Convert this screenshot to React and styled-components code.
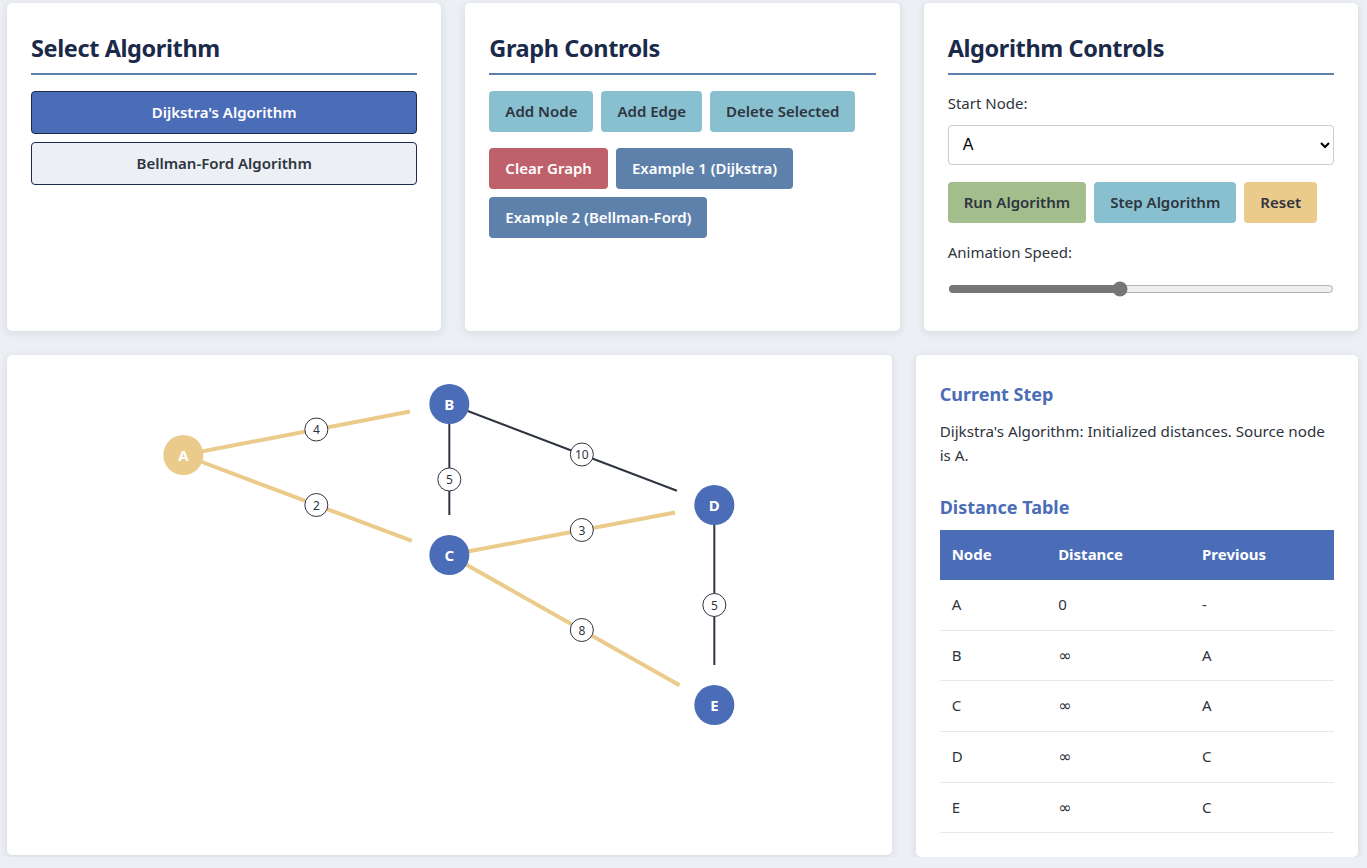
import React, { useState } from "react";
import styled, { createGlobalStyle } from "styled-components";

const C = {
  bg: "#eceff4",
  text: "#2e3440",
  navy: "#1b2a4a",
  primary: "#4b6cb7",
  line: "#5e81ac",
  frost: "#88c0d0",
  red: "#bf616a",
  green: "#a3be8c",
  yellow: "#ebcb8b",
  steel: "#5e81ac",
};

const Global = createGlobalStyle`
  html, body { margin: 0; padding: 0; background: ${C.bg}; }
  body {
    font-family: "Noto Sans", "Open Sans", sans-serif;
    color: ${C.text};
    line-height: 1.6;
  }
  * { box-sizing: border-box; }
`;

const Page = styled.div`
  padding: 3px 9px 0 7px;
  display: flex;
  flex-direction: column;
  gap: 24px;
`;

const TopGrid = styled.div`
  display: grid;
  grid-template-columns: repeat(3, 1fr);
  gap: 24px;
`;

const BottomGrid = styled.div`
  display: grid;
  grid-template-columns: 2fr 1fr;
  gap: 24px;
  align-items: start;
`;

const Card = styled.section`
  background: #fff;
  border-radius: 5px;
  box-shadow: 0 2px 8px rgba(46, 52, 64, 0.12);
  padding: ${(p) => (p.$flush ? "0" : "24px")};
`;

const Title = styled.h2`
  margin: 0 0 16px;
  font-size: 23.5px;
  letter-spacing: -0.4px;
  line-height: 36px;
  font-weight: 700;
  color: ${C.navy};
  padding: 3px 0 7px;
  border-bottom: 2px solid ${C.line};
`;

const AlgoList = styled.div`
  display: flex;
  flex-direction: column;
  gap: 8px;
`;

const AlgoButton = styled.button`
  font-family: inherit;
  font-size: 15px;
  font-weight: 600;
  line-height: 25px;
  padding: 8px 16px;
  border-radius: 4px;
  border: 1px solid ${C.navy};
  background: ${(p) => (p.$active ? C.primary : C.bg)};
  color: ${(p) => (p.$active ? "#fff" : C.text)};
  cursor: pointer;
  width: 100%;
`;

const ButtonRow = styled.div`
  display: flex;
  flex-wrap: wrap;
  gap: 8px;
  margin-bottom: ${(p) => p.$mb || 0}px;
`;

const tones = {
  frost: { bg: C.frost, fg: C.text },
  red: { bg: C.red, fg: "#fff" },
  steel: { bg: C.steel, fg: "#fff" },
  green: { bg: C.green, fg: C.text },
  yellow: { bg: C.yellow, fg: C.text },
};

const Btn = styled.button`
  font-family: inherit;
  font-size: 15px;
  font-weight: 600;
  line-height: 25px;
  padding: 8px 16px;
  border: none;
  border-radius: 4px;
  background: ${(p) => tones[p.$tone].bg};
  color: ${(p) => tones[p.$tone].fg};
  cursor: pointer;
`;

const Label = styled.label`
  display: block;
  font-size: 15px;
  line-height: 25.6px;
  margin-bottom: ${(p) => p.$mb || 0}px;
`;

const Select = styled.select`
  display: block;
  width: 100%;
  height: 40px;
  padding: 0 10px;
  font-family: "Liberation Sans", Arial, sans-serif;
  font-size: 16px;
  color: #000;
  border: 1px solid #c9ccd1;
  border-radius: 4px;
  background: #fff;
  margin-bottom: 17px;
`;

const Range = styled.input`
  display: block;
  width: 100%;
  height: 16px;
  margin: 16px 0 10px;
  accent-color: #767676;
`;

const GraphSvg = styled.svg`
  display: block;
  width: 100%;
  height: 500px;
`;

const SubTitle = styled.h3`
  margin: ${(p) => p.$mt || 0}px 0 ${(p) => p.$mb || 0}px;
  font-size: 18px;
  line-height: 30px;
  font-weight: 700;
  color: ${C.primary};
`;

const StepText = styled.p`
  margin: 0;
  font-size: 15.2px;
  line-height: 24px;
`;

const Table = styled.table`
  width: 100%;
  border-collapse: collapse;
  table-layout: fixed;
  font-size: 15px;
`;

const Th = styled.th`
  background: ${C.primary};
  color: #fff;
  text-align: left;
  font-weight: 700;
  padding: 12px;
  line-height: 25.6px;
  width: ${(p) => p.$w};
`;

const Td = styled.td`
  padding: 12px;
  height: 50.5px;
  line-height: 25.6px;
  border-bottom: 1px solid #e5e9f0;
`;

const Inf = styled.span`
  font-family: "DejaVu Sans", sans-serif;
  font-size: 16px;
  line-height: 1;
`;

const nodes = {
  A: { x: 176, y: 100 },
  B: { x: 442, y: 49 },
  C: { x: 442, y: 200 },
  D: { x: 707, y: 150 },
  E: { x: 707, y: 350 },
};

const edges = [
  { from: "A", to: "B", w: 4, hl: true },
  { from: "A", to: "C", w: 2, hl: true },
  { from: "B", to: "C", w: 5 },
  { from: "B", to: "D", w: 10 },
  { from: "C", to: "D", w: 3, hl: true },
  { from: "C", to: "E", w: 8, hl: true },
  { from: "D", to: "E", w: 5 },
];

const highlighted = new Set(["A"]);

function Graph() {
  return (
    <GraphSvg viewBox="0 0 884 500">
      {edges.map((e) => {
        const a = nodes[e.from];
        const b = nodes[e.to];
        const dx = b.x - a.x;
        const dy = b.y - a.y;
        const len = Math.hypot(dx, dy);
        const ex = b.x - (dx / len) * 40;
        const ey = b.y - (dy / len) * 40;
        return (
          <line
            key={e.from + e.to}
            x1={a.x}
            y1={a.y}
            x2={ex}
            y2={ey}
            stroke={e.hl ? C.yellow : C.text}
            strokeWidth={e.hl ? 4 : 2}
          />
        );
      })}
      {edges.map((e) => {
        const a = nodes[e.from];
        const b = nodes[e.to];
        const mx = (a.x + b.x) / 2;
        const my = (a.y + b.y) / 2;
        return (
          <g key={"w" + e.from + e.to}>
            <circle cx={mx} cy={my} r={11.5} fill="#fff" stroke={C.text} strokeWidth={1} />
            <text
              x={mx}
              y={my}
              textAnchor="middle"
              dominantBaseline="central"
              fontSize="12"
              fontFamily="Noto Sans, sans-serif"
              fill={C.text}
            >
              {e.w}
            </text>
          </g>
        );
      })}
      {Object.entries(nodes).map(([k, n]) => (
        <g key={k}>
          <circle cx={n.x} cy={n.y} r={20} fill={highlighted.has(k) ? C.yellow : C.primary} />
          <text
            x={n.x}
            y={n.y}
            textAnchor="middle"
            dominantBaseline="central"
            fontSize="15"
            fontWeight="700"
            fontFamily="Noto Sans, sans-serif"
            fill="#fff"
          >
            {k}
          </text>
        </g>
      ))}
    </GraphSvg>
  );
}

const rows = [
  ["A", "0", "-"],
  ["B", "∞", "A"],
  ["C", "∞", "A"],
  ["D", "∞", "C"],
  ["E", "∞", "C"],
];

export default function App() {
  const [algo, setAlgo] = useState("dijkstra");
  const [speed, setSpeed] = useState(5);
  return (
    <>
      <Global />
      <Page>
        <TopGrid>
          <Card>
            <Title>Select Algorithm</Title>
            <AlgoList>
              <AlgoButton $active={algo === "dijkstra"} onClick={() => setAlgo("dijkstra")}>
                Dijkstra's Algorithm
              </AlgoButton>
              <AlgoButton $active={algo === "bellman"} onClick={() => setAlgo("bellman")}>
                Bellman-Ford Algorithm
              </AlgoButton>
            </AlgoList>
          </Card>
          <Card>
            <Title>Graph Controls</Title>
            <ButtonRow $mb={16}>
              <Btn $tone="frost">Add Node</Btn>
              <Btn $tone="frost">Add Edge</Btn>
              <Btn $tone="frost">Delete Selected</Btn>
            </ButtonRow>
            <ButtonRow>
              <Btn $tone="red">Clear Graph</Btn>
              <Btn $tone="steel">Example 1 (Dijkstra)</Btn>
              <Btn $tone="steel">Example 2 (Bellman-Ford)</Btn>
            </ButtonRow>
          </Card>
          <Card>
            <Title>Algorithm Controls</Title>
            <Label $mb={8}>Start Node:</Label>
            <Select defaultValue="A">
              {["A", "B", "C", "D", "E"].map((n) => (
                <option key={n}>{n}</option>
              ))}
            </Select>
            <ButtonRow $mb={17}>
              <Btn $tone="green">Run Algorithm</Btn>
              <Btn $tone="frost">Step Algorithm</Btn>
              <Btn $tone="yellow">Reset</Btn>
            </ButtonRow>
            <Label>Animation Speed:</Label>
            <Range
              type="range"
              min="1"
              max="10"
              value={speed}
              onChange={(e) => setSpeed(+e.target.value)}
            />
          </Card>
        </TopGrid>
        <BottomGrid>
          <Card $flush>
            <Graph />
          </Card>
          <Card>
            <SubTitle $mb={10}>Current Step</SubTitle>
            <StepText>Dijkstra's Algorithm: Initialized distances. Source node is A.</StepText>
            <SubTitle $mt={25} $mb={8}>Distance Table</SubTitle>
            <Table>
              <thead>
                <tr>
                  <Th $w="27%">Node</Th>
                  <Th $w="36.5%">Distance</Th>
                  <Th $w="36.5%">Previous</Th>
                </tr>
              </thead>
              <tbody>
                {rows.map((r) => (
                  <tr key={r[0]}>
                    {r.map((c, i) => (
                      <Td key={i}>{c === "∞" ? <Inf>{c}</Inf> : c}</Td>
                    ))}
                  </tr>
                ))}
              </tbody>
            </Table>
          </Card>
        </BottomGrid>
      </Page>
    </>
  );
}
